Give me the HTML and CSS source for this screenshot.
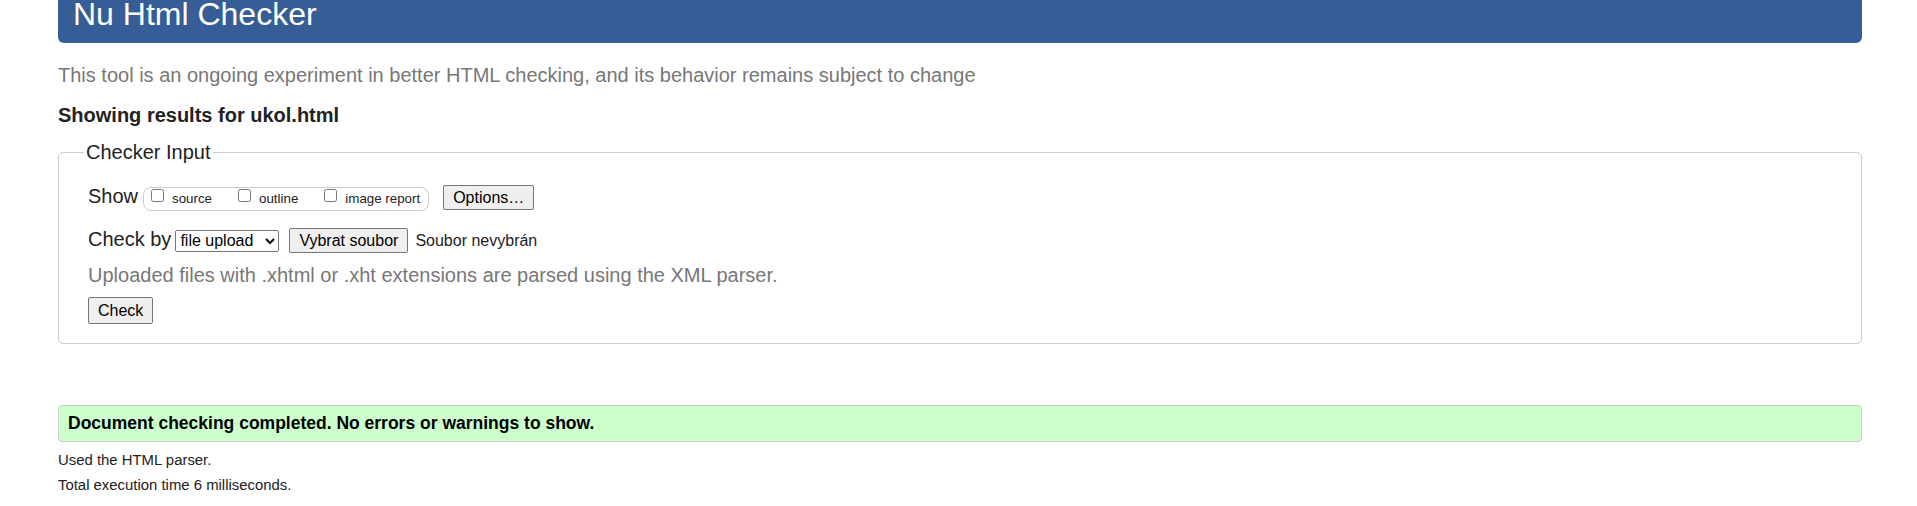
FILE: index.html
```html
<!DOCTYPE html>
<html lang="en">
<head>
<meta charset="utf-8">
<title>Nu Html Checker</title>
<link rel="stylesheet" href="styles.css">
</head>
<body>
<div class="page">
  <h1 class="title">Nu Html Checker</h1>
  <p class="intro">This tool is an ongoing experiment in better HTML checking, and its behavior remains subject to change</p>
  <h2 class="results-for">Showing results for ukol.html</h2>
  <fieldset class="checker">
    <legend class="checker-legend">Checker Input</legend>
    <div class="row show-row">
      <span class="row-label">Show</span>
      <span class="opts">
        <label class="opt"><input type="checkbox" class="cb">source</label>
        <label class="opt"><input type="checkbox" class="cb">outline</label>
        <label class="opt"><input type="checkbox" class="cb">image report</label>
      </span>
      <button type="button" class="btn btn-options">Options…</button>
    </div>
    <div class="row check-row">
      <span class="row-label">Check by</span>
      <select class="sel"><option>file upload</option></select>
      <button type="button" class="btn btn-file">Vybrat soubor</button>
      <span class="file-status">Soubor nevybrán</span>
    </div>
    <p class="note">Uploaded files with .xhtml or .xht extensions are parsed using the XML parser.</p>
    <button type="button" class="btn btn-check">Check</button>
  </fieldset>
  <p class="success">Document checking completed. No errors or warnings to show.</p>
  <p class="meta meta-first">Used the HTML parser.</p>
  <p class="meta">Total execution time 6 milliseconds.</p>
</div>
</body>
</html>
```

FILE: styles.css
```css
* { box-sizing: border-box; }
html, body { margin: 0; padding: 0; background: #fff; }
body {
  font-family: "Liberation Sans", Arial, sans-serif;
  color: #222;
}
.page { padding: 0 55px 0 58px; }

.title {
  margin: 0;
  padding: 0 15px 14px;
  background: #365d95;
  color: #fff;
  font-size: 32px;
  font-weight: normal;
  line-height: 29px;
  border-radius: 0 0 6px 6px;
}
.intro {
  margin: 20px 0 0;
  font-size: 20px;
  line-height: 24px;
  color: #777;
}
.results-for {
  margin: 16px 0 0;
  font-size: 20px;
  line-height: 24px;
  font-weight: bold;
}
.checker {
  margin: 13px 0 0;
  padding: 19px 25px 19px 29px;
  border: 1px solid #ccc;
  border-radius: 5px;
  min-width: 0;
}
.checker-legend {
  margin-left: -4px;
  padding: 0 2px 1px;
  font-size: 20px;
  line-height: 24px;
}
.row {
  display: flex;
  align-items: baseline;
}
.row-label {
  font-size: 20px;
  line-height: 24px;
}
.show-row .row-label { margin-right: 5px; }
.check-row { margin-top: 16px; }
.check-row .row-label { margin-right: 4px; }

.opts {
  display: inline-flex;
  align-items: baseline;
  padding: 1px 8px 1px 7px;
  border: 1px solid #ccc;
  border-radius: 8px;
  margin-right: 14px;
}
.opt {
  display: inline-flex;
  align-items: baseline;
  font-size: 13.33px;
  line-height: 20px;
}
.opt + .opt { margin-left: 26px; }
.cb {
  width: 13px;
  height: 13px;
  margin: 0 8px 0 0;
  align-self: flex-start;
}

.btn {
  font-family: "Liberation Sans", Arial, sans-serif;
  font-size: 16px;
  line-height: 19px;
  color: #000;
  background: #efefef;
  border: 1px solid #767676;
  border-radius: 2px;
  padding: 2px 9px;
}
.sel {
  font-family: "Liberation Sans", Arial, sans-serif;
  font-size: 16px;
  width: 104px;
  height: 22px;
  color: #000;
  margin-right: 10px;
}
.btn-file { margin-right: 7px; }
.file-status { font-size: 16px; }

.note {
  margin: 10px 0 0;
  font-size: 20px;
  line-height: 24px;
  color: #777;
}
.btn-check { margin-top: 10px; padding: 3px 9px; }

.success {
  margin: 61px 0 0;
  padding: 7px 9px;
  background: #ccffcc;
  border: 1px solid #ccc;
  border-radius: 4px;
  font-size: 17.5px;
  line-height: 21px;
  font-weight: bold;
  color: #000;
}
.meta {
  margin: 0;
  font-size: 14.9px;
  line-height: 25px;
}
.meta-first { margin-top: 6px; }
```
